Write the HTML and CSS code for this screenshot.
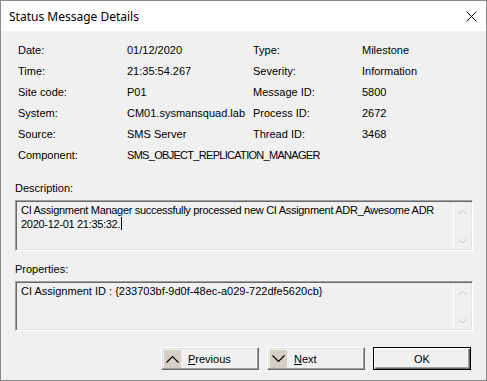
FILE: index.html
```html
<!DOCTYPE html>
<html lang="en">
<head>
  <meta charset="UTF-8" />
  <meta name="viewport" content="width=device-width, initial-scale=1" />
  <title>Status Message Details</title>
  <link rel="stylesheet" href="styles.css">
</head>
<body>
  <div class="window">
    <div class="titlebar">
      <span class="title">Status Message Details</span>
      <span class="close">
        <svg width="11" height="11" viewBox="0 0 11 11"><path d="M0.5 0.5 L10.5 10.5 M10.5 0.5 L0.5 10.5" stroke="#000" stroke-width="1" fill="none"/></svg>
      </span>
    </div>

    <div class="content">
      <div class="info">
        <span>Date:</span><span>01/12/2020</span><span>Type:</span><span>Milestone</span>
        <span>Time:</span><span>21:35:54.267</span><span>Severity:</span><span>Information</span>
        <span>Site code:</span><span>P01</span><span>Message ID:</span><span>5800</span>
        <span>System:</span><span>CM01.sysmansquad.lab</span><span>Process ID:</span><span>2672</span>
        <span>Source:</span><span>SMS Server</span><span>Thread ID:</span><span>3468</span>
        <span>Component:</span><span class="wide">SMS_OBJECT_REPLICATION_MANAGER</span>
      </div>

      <div class="label desc-label">Description:</div>
      <div class="textbox">
        <div class="text desc">CI Assignment Manager successfully processed new CI Assignment ADR_Awesome ADR<br>2020-12-01 21:35:32.<span class="caret"></span></div>
        <div class="scroll">
          <svg width="9" height="6" viewBox="0 0 9 6"><path d="M0.5 5 L4.5 1 L8.5 5" stroke="#c4c4c4" fill="none"/></svg>
          <svg width="9" height="6" viewBox="0 0 9 6"><path d="M0.5 1 L4.5 5 L8.5 1" stroke="#c4c4c4" fill="none"/></svg>
        </div>
      </div>

      <div class="label props-label">Properties:</div>
      <div class="textbox">
        <div class="text">CI Assignment ID : {233703bf-9d0f-48ec-a029-722dfe5620cb}</div>
        <div class="scroll">
          <svg width="9" height="6" viewBox="0 0 9 6"><path d="M0.5 5 L4.5 1 L8.5 5" stroke="#c4c4c4" fill="none"/></svg>
          <svg width="9" height="6" viewBox="0 0 9 6"><path d="M0.5 1 L4.5 5 L8.5 1" stroke="#c4c4c4" fill="none"/></svg>
        </div>
      </div>

      <div class="buttons">
        <button class="btn nav">
          <span class="icon"><svg width="13" height="8" viewBox="0 0 13 8"><path d="M0.5 7.5 L6.5 1.5 L12.5 7.5" stroke="#000" stroke-width="1.2" fill="none"/></svg></span>
          <span><u>P</u>revious</span>
        </button>
        <button class="btn nav">
          <span class="icon"><svg width="13" height="8" viewBox="0 0 13 8"><path d="M0.5 0.5 L6.5 6.5 L12.5 0.5" stroke="#000" stroke-width="1.2" fill="none"/></svg></span>
          <span><u>N</u>ext</span>
        </button>
        <button class="btn ok">OK</button>
      </div>
    </div>
  </div>
</body>
</html>
```

FILE: styles.css
```css
body {
  margin: 0;
  padding: 0;
  background: #4a1a28;
  font-family: "Liberation Sans", Arial, sans-serif;
  font-size: 11px;
  color: #000;
}

.window {
  width: 487px;
  height: 381px;
  box-sizing: border-box;
  border: 1px solid #8a8a8a;
  background: #f0f0f0;
  display: flex;
  flex-direction: column;
}

.titlebar {
  height: 30px;
  background: #fff;
  display: flex;
  align-items: center;
  justify-content: space-between;
  padding-left: 8px;
  flex-shrink: 0;
}

.title {
  font-family: "Noto Sans", "Open Sans", sans-serif;
  font-size: 12px;
  color: #000;
}

.close {
  width: 30px;
  display: flex;
  justify-content: center;
}

.content {
  padding: 8px 13px 0 14px;
  display: flex;
  flex-direction: column;
}

.info {
  display: grid;
  grid-template-columns: 109px 126px 109px 1fr;
  grid-auto-rows: 21px;
  align-items: center;
  padding-left: 3px;
}

.info .wide {
  grid-column: span 3;
  letter-spacing: -0.7px;
}

.label {
  line-height: 14px;
}

.desc-label {
  margin-top: 16px;
  margin-bottom: 5px;
}

.props-label {
  margin-top: 11px;
  margin-bottom: 5px;
}

.textbox {
  height: 51px;
  box-sizing: border-box;
  border-top: 1px solid #a0a0a0;
  border-left: 1px solid #a0a0a0;
  border-bottom: 1px solid #fff;
  border-right: 1px solid #fff;
  box-shadow: inset 1px 1px 0 #696969, inset -1px -1px 0 #e3e3e3;
  display: flex;
}

.textbox + .label + .textbox {
  height: 50px;
}

.text {
  flex: 1;
  padding: 2px 4px 0 5px;
  line-height: 14px;
}

.text.desc {
  white-space: nowrap;
  letter-spacing: -0.3px;
}

.caret {
  display: inline-block;
  width: 1px;
  height: 13px;
  background: #000;
  vertical-align: -2px;
  margin-left: 1px;
}

.scroll {
  width: 17px;
  margin: 2px 1px 1px 0;
  border-left: 1px solid #fff;
  display: flex;
  flex-direction: column;
  align-items: center;
  justify-content: space-between;
  padding: 6px 0 5px;
}

.buttons {
  display: flex;
  justify-content: flex-end;
  gap: 8px;
  margin-top: 16px;
  margin-right: 2px;
}

.btn {
  width: 98px;
  height: 23px;
  box-sizing: border-box;
  background: #f0f0f0;
  font-family: "Liberation Sans", Arial, sans-serif;
  font-size: 11px;
  color: #000;
  border-top: 1px solid #fff;
  border-left: 1px solid #fff;
  border-bottom: 1px solid #696969;
  border-right: 1px solid #696969;
  box-shadow: inset -1px -1px 0 #a0a0a0, inset 1px 1px 0 #e3e3e3;
  padding: 0;
  cursor: pointer;
}

.btn.nav {
  display: flex;
  align-items: center;
  gap: 7px;
  padding-left: 2px;
}

.btn u {
  text-decoration: underline;
}

.icon {
  width: 17px;
  height: 18px;
  background: #d4d0c8;
  display: flex;
  align-items: center;
  justify-content: center;
}

.btn.ok {
  border: 1px solid #000;
  box-shadow: inset 1px 1px 0 #fff, inset -1px -1px 0 #696969, inset -2px -2px 0 #a0a0a0;
}
```
